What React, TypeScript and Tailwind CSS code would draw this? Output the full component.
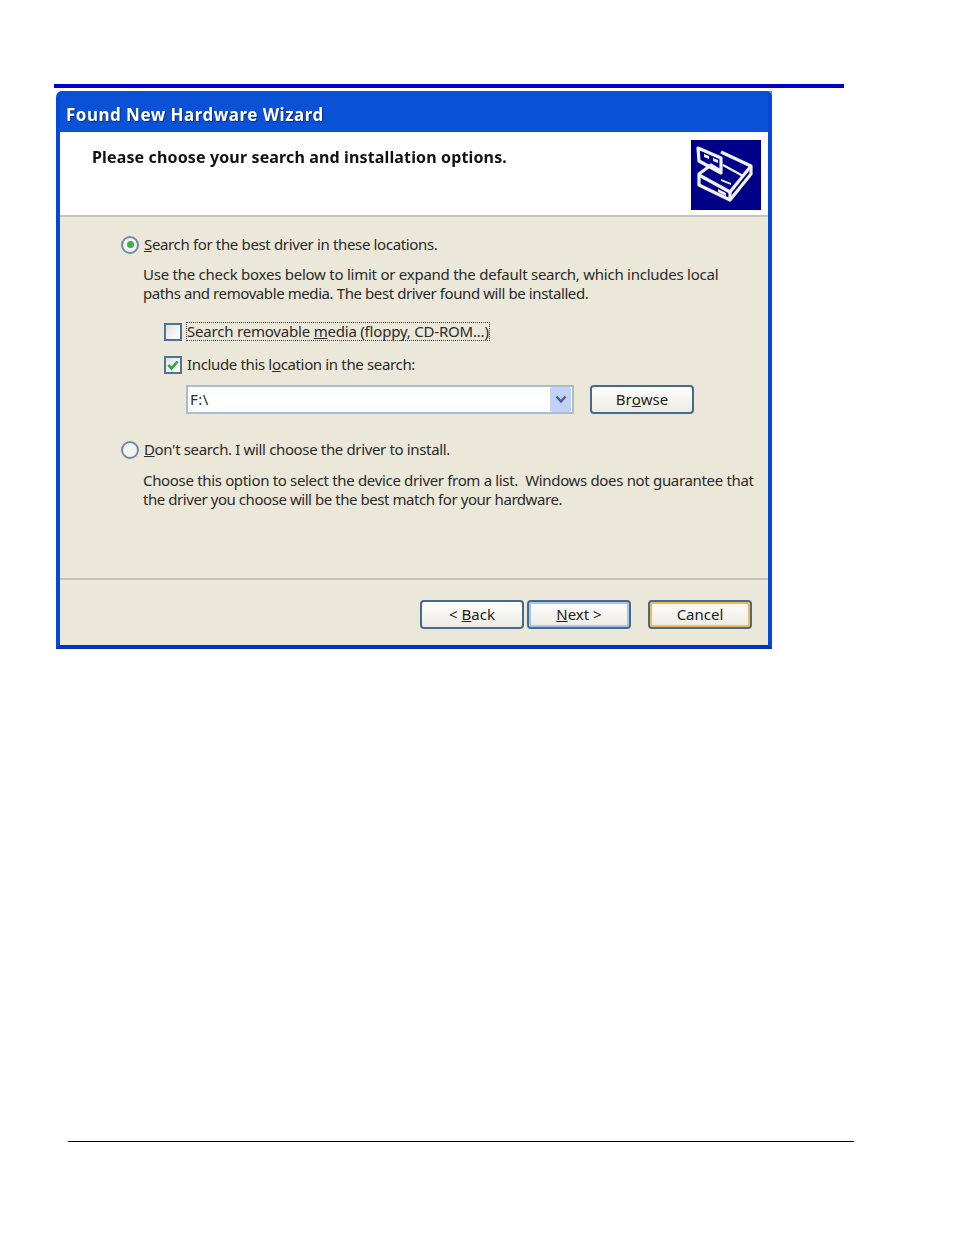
import React from 'react'

const WizardIcon = () => (
  <svg width="70" height="70" viewBox="0 0 70 70" className="block">
    <defs>
      <pattern id="dots" width="2" height="2" patternUnits="userSpaceOnUse">
        <rect width="2" height="2" fill="#00008c" />
        <rect width="1" height="1" fill="#000000" />
      </pattern>
    </defs>
    <rect width="70" height="70" fill="url(#dots)" />
    <g fill="none" stroke="#f2f2f2" strokeWidth="3.2" strokeLinejoin="round">
      <path d="M7 8 L30 18 L30 33 L8 21 Z" />
      <path d="M30 12 L60 26 L60 34 L39 60 L8 45 L8 34 L20 25 L30 31" />
      <path d="M8 35 L39 52 L60 26" />
      <path d="M39 52 L39 60" />
      <path d="M32 25 L52 36" strokeWidth="2.2" />
    </g>
    <path d="M13 14 l5 2 v3 l-5 -2 z M22 18 l5 2 v3 l-5 -2 z M27 49 l8 4 v3 l-8 -4 z M30 39 l10 4 v2 l-10 -4 z" fill="#f2f2f2" />
  </svg>
)

const Radio = ({ checked }: { checked?: boolean }) => (
  <span className="w-[18px] h-[18px] rounded-full border-2 border-[#6d8ca8] bg-[#f4f4ee] flex items-center justify-center shrink-0">
    {checked && <span className="w-[7px] h-[7px] rounded-full bg-[#3fb04f]" />}
  </span>
)

const Check = ({ checked }: { checked?: boolean }) => (
  <span className="w-[18px] h-[18px] border-2 border-[#4f7396] bg-gradient-to-br from-[#e4e4dc] to-[#ffffff] flex items-center justify-center shrink-0">
    {checked && (
      <svg width="12" height="12" viewBox="0 0 12 12">
        <path d="M1.5 6 L4.5 9.5 L10.5 2.5" fill="none" stroke="#27a83a" strokeWidth="2.6" />
      </svg>
    )}
  </span>
)

const XpButton = ({ children, className }: { children: React.ReactNode; className?: string }) => (
  <button className={`h-[29px] w-[104px] rounded-[4px] border-2 border-[#47698c] bg-gradient-to-b from-[#fdfdfb] to-[#ecebe3] text-[15px] tracking-[0px] text-[#222] flex items-center justify-center ${className ?? ''}`}>
    {children}
  </button>
)

const App = () => {
  return (
    <div className="relative w-[954px] h-[1235px] bg-white pt-[84px] pl-[54px] font-['Noto_Sans','Liberation_Sans',sans-serif]">
      <div className="w-[790px] h-[4px] bg-[#0000c8]" />
      <div className="absolute left-[765px] top-[91px] w-[7px] h-[7px] bg-[#8c8c84]" />

      <div className="ml-[2px] mt-[3px] w-[716px] h-[558px] flex flex-col rounded-t-[6px] bg-gradient-to-b from-[#0a50d4] via-[#0a62ee] to-[#0346d2] border-x-[4px] border-b-[4px] border-x-[#0548d8] border-b-[#0331c4] blur-[0.5px]">
        <div className="h-[41px] shrink-0 flex items-center pl-[6px] pt-[6px]">
          <span className="text-[17px] font-bold tracking-[0.48px] text-white [text-shadow:1px_1px_1px_#0a2a8a]">
            Found New Hardware Wizard
          </span>
        </div>

        <div className="h-[83px] shrink-0 bg-white flex justify-between pl-[32px] pr-[7px] pt-[8px]">
          <span className="text-[16px] font-bold tracking-[0.14px] text-[#111] mt-[7px] leading-[20px]">
            Please choose your search and installation options.
          </span>
          <WizardIcon />
        </div>
        <div className="h-[2px] shrink-0 bg-[#c6c3b8]" />

        <div className="flex-1 bg-[#ebe8d9] flex flex-col text-[15px] tracking-[-0.35px] text-[#2a2a2a] leading-[19px]">
          <div className="flex-1 pl-[61px] pt-[18px]">
            <div className="flex items-center gap-[5px] h-[19px]">
              <Radio checked />
              <span><u>S</u>earch for the best driver in these locations.</span>
            </div>
            <p className="ml-[22px] mt-[11px] whitespace-nowrap">
              <span className="tracking-[-0.25px]">Use the check boxes below to limit or expand the default search, which includes local</span>
              <br />
              <span className="tracking-[-0.41px]">paths and removable media. The best driver found will be installed.</span>
            </p>
            <div className="ml-[43px] mt-[19px] flex items-center gap-[4px] h-[19px]">
              <Check />
              <span className="border border-dotted border-[#444] leading-[17px] tracking-[-0.2px]">
                Search removable <u>m</u>edia (floppy, CD-ROM...)
              </span>
            </div>
            <div className="ml-[43px] mt-[14px] flex items-center gap-[5px] h-[19px]">
              <Check checked />
              <span>Include this l<u>o</u>cation in the search:</span>
            </div>
            <div className="ml-[65px] mt-[11px] flex items-center gap-[16px]">
              <div className="w-[388px] h-[29px] border-2 border-[#a9bdd0] bg-white flex items-center justify-between pl-[2px] pr-[1px]">
                <span className="tracking-[0.5px]">F:\</span>
                <span className="w-[21px] h-[25px] rounded-[2px] bg-[#c2d2f6] flex items-center justify-center">
                  <svg width="12" height="9" viewBox="0 0 12 9">
                    <path d="M1.5 1.5 L6 6.5 L10.5 1.5" fill="none" stroke="#4d6185" strokeWidth="2.4" />
                  </svg>
                </span>
              </div>
              <XpButton>Br<u>o</u>wse</XpButton>
            </div>
            <div className="mt-[26px] flex items-center gap-[5px] h-[19px]">
              <Radio />
              <span><u>D</u>on't search. I will choose the driver to install.</span>
            </div>
            <p className="ml-[22px] mt-[12px] whitespace-nowrap">
              <span className="tracking-[-0.33px]">Choose this option to select the device driver from a list.&nbsp; Windows does not guarantee that</span>
              <br />
              <span className="tracking-[-0.44px]">the driver you choose will be the best match for your hardware.</span>
            </p>
          </div>

          <div className="h-[2px] shrink-0 bg-[#c6c3b8]" />
          <div className="h-[65px] shrink-0 flex items-start justify-end pt-[20px] pr-[16px]">
            <XpButton>&lt; <u className="ml-[4px]">B</u>ack</XpButton>
            <XpButton className="ml-[3px] shadow-[inset_0_0_0_2px_#a9c4ee]"><u>N</u>ext &gt;</XpButton>
            <XpButton className="ml-[17px] shadow-[inset_0_0_0_2px_#f5b84e]">Cancel</XpButton>
          </div>
        </div>
      </div>

      <div className="ml-[14px] mt-[492px] w-[786px] h-px bg-black" />
    </div>
  )
}

export default App
